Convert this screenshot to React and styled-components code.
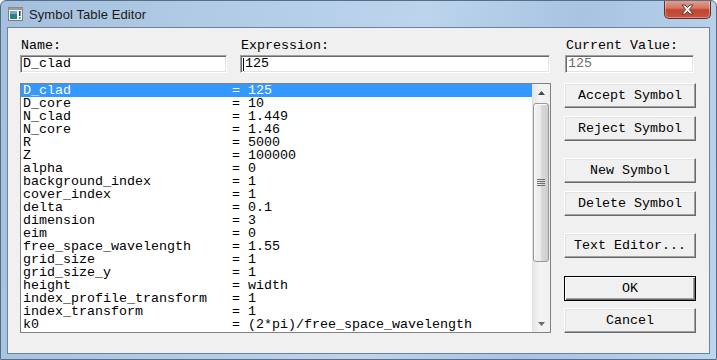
import React from 'react';
import styled, {createGlobalStyle} from 'styled-components';

const GlobalStyle = createGlobalStyle`
  html, body {
    margin: 0;
    padding: 0;
    background: #ffffff;
  }
`;

const MONO = `"Liberation Mono", "DejaVu Sans Mono", monospace`;

const symbols = [
  ['D_clad', '125'],
  ['D_core', '10'],
  ['N_clad', '1.449'],
  ['N_core', '1.46'],
  ['R', '5000'],
  ['Z', '100000'],
  ['alpha', '0'],
  ['background_index', '1'],
  ['cover_index', '1'],
  ['delta', '0.1'],
  ['dimension', '3'],
  ['eim', '0'],
  ['free_space_wavelength', '1.55'],
  ['grid_size', '1'],
  ['grid_size_y', '1'],
  ['height', 'width'],
  ['index_profile_transform', '1'],
  ['index_transform', '1'],
  ['k0', '(2*pi)/free_space_wavelength'],
];

//-----< Window frame -----\\
const Window = styled.div`
  width: 717px;
  height: 360px;
  box-sizing: border-box;
  display: flex;
  flex-direction: column;
  border: 1px solid #566e88;
  border-radius: 6px 6px 0 0;
  background: linear-gradient(100deg, #a4c0dd 0%, #b3cce6 30%, #bcd4ec 55%, #a8c4e1 75%, #bdd5ee 100%);
  overflow: hidden;
`;

const TitleBar = styled.div`
  height: 26px;
  display: flex;
  align-items: center;
  padding-left: 7px;
  flex-shrink: 0;
`;

const TitleText = styled.span`
  margin-left: 6px;
  font-family: "Liberation Sans", Arial, sans-serif;
  font-size: 13px;
  color: #1b1b1b;
  letter-spacing: 0.1px;
`;

const CloseButton = styled.div`
  margin-left: auto;
  margin-right: 5px;
  align-self: flex-start;
  margin-top: -1px;
  width: 47px;
  height: 19px;
  box-sizing: border-box;
  border: 1px solid #6a2b24;
  border-top: none;
  border-radius: 0 0 5px 5px;
  background: linear-gradient(180deg, #e2a496 0%, #d47462 45%, #c2452f 55%, #c9553f 100%);
  box-shadow: inset 0 0 0 1px rgba(255,255,255,0.35);
  display: flex;
  align-items: center;
  justify-content: center;
`;

const Client = styled.div`
  margin: 0 6px;
  height: 327px;
  box-sizing: border-box;
  border: 1px solid #6e8196;
  background: #f0f0f0;
  padding: 10px 12px 0 12px;
  font-family: ${MONO};
  font-size: 13.33px;
  color: #000;
`;

//-----< Fields -----\\
const TopRow = styled.div`
  display: flex;
  align-items: flex-start;
`;

const Field = styled.div`
  width: ${p => p.$w}px;
  margin-left: ${p => p.$ml || 0}px;
  display: flex;
  flex-direction: column;
`;

const Label = styled.label`
  height: 15px;
  line-height: 15px;
  padding-left: 1px;
  margin-bottom: 2px;
  color: #000;
  white-space: pre;
`;

const Input = styled.div`
  height: 18px;
  box-sizing: border-box;
  border: 1px solid;
  border-color: #a0a0a0 #ffffff #ffffff #a0a0a0;
  box-shadow: inset 1px 1px #696969, inset -1px -1px #e3e3e3;
  background: #fff;
  padding: 0 2px;
  line-height: 16px;
  display: flex;
  align-items: center;
  color: ${p => p.$disabled ? '#6d6d6d' : '#000'};
  white-space: pre;
`;

const Caret = styled.span`
  width: 1px;
  height: 13px;
  background: #000;
  margin-right: 1px;
`;

//-----< List -----\\
const BottomRow = styled.div`
  display: flex;
  margin-top: 10px;
`;

const ListBox = styled.div`
  width: 531px;
  height: 250px;
  box-sizing: border-box;
  border: 1px solid #828282;
  background: #fff;
  display: flex;
`;

const Rows = styled.div`
  flex: 1;
  overflow: hidden;
`;

const Row = styled.div`
  display: grid;
  grid-template-columns: 209px 1fr;
  height: 13px;
  line-height: 13px;
  padding-left: 2px;
  white-space: pre;
  background: ${p => p.$selected ? '#3399ff' : 'transparent'};
  color: ${p => p.$selected ? '#fff' : '#000'};
`;

const ScrollBar = styled.div`
  width: 17px;
  display: flex;
  flex-direction: column;
  background: linear-gradient(90deg, #e6e6e6, #f4f4f4 40%, #f0f0f0);
  border-left: 1px solid #e2e2e2;
`;

const ArrowBox = styled.div`
  height: 17px;
  display: flex;
  align-items: center;
  justify-content: center;
  flex-shrink: 0;
`;

const Track = styled.div`
  flex: 1;
  padding-top: 2px;
`;

const Thumb = styled.div`
  height: 159px;
  margin: 0 1px 0 0;
  box-sizing: border-box;
  border: 1px solid #979797;
  border-radius: 3px;
  background: linear-gradient(90deg, #f2f2f2 0%, #ebebeb 45%, #d9d9d9 55%, #cfcfcf 100%);
  box-shadow: inset 1px 1px #fbfbfb;
  display: flex;
  align-items: center;
  justify-content: center;
`;

//-----< Buttons -----\\
const ButtonColumn = styled.div`
  width: 132px;
  margin-left: 13px;
  display: flex;
  flex-direction: column;
`;

const Button = styled.button`
  height: 25px;
  margin-top: ${p => p.$gap || 0}px;
  box-sizing: border-box;
  padding: 0;
  font-family: ${MONO};
  font-size: 13.33px;
  color: #000;
  background: #f0f0f0;
  border: 1px solid;
  border-color: ${p => p.$default ? '#000 #000 #000 #000' : '#ffffff #696969 #696969 #ffffff'};
  box-shadow: ${p => p.$default
    ? 'inset 1px 1px #ffffff, inset -1px -1px #696969, inset -2px -2px #a0a0a0'
    : 'inset -1px -1px #a0a0a0, inset 1px 1px #e3e3e3'};
  white-space: pre;
`;

function AppIcon() {
  return (
    <svg width="15" height="14" viewBox="0 0 15 14">
      <rect x="0.5" y="0.5" width="14" height="13" fill="#f4f4f4" stroke="#7d7d7d"/>
      <rect x="0.5" y="0.5" width="14" height="2.5" fill="#9a9a9a"/>
      <rect x="2" y="4" width="7" height="8" fill="#2d7f8a"/>
      <rect x="2" y="4" width="7" height="3" fill="#6fb0b8"/>
      <rect x="11" y="4" width="1.5" height="5" fill="#22355f"/>
      <rect x="11" y="10" width="1.5" height="2" fill="#3aa33a"/>
    </svg>
  );
}

function CloseGlyph() {
  return (
    <svg width="13" height="11" viewBox="0 0 13 11">
      <path d="M1 1 L4 1 L6.5 3.6 L9 1 L12 1 L8.3 5.5 L12 10 L9 10 L6.5 7.4 L4 10 L1 10 L4.7 5.5 Z"
        fill="#ffffff" stroke="#5a2a26" strokeWidth="0.9" strokeLinejoin="round"/>
    </svg>
  );
}

function Arrow({down}) {
  return (
    <svg width="7" height="4" viewBox="0 0 7 4">
      {down
        ? <path d="M0 0 L7 0 L3.5 4 Z" fill="#6a6a6a"/>
        : <path d="M0 4 L7 4 L3.5 0 Z" fill="#4a4a4a"/>}
    </svg>
  );
}

function Grip() {
  return (
    <svg width="8" height="7" viewBox="0 0 8 7">
      <rect x="0" y="0" width="8" height="1" fill="#6d6d6d"/>
      <rect x="0" y="2" width="8" height="1" fill="#6d6d6d"/>
      <rect x="0" y="4" width="8" height="1" fill="#6d6d6d"/>
      <rect x="0" y="6" width="8" height="1" fill="#6d6d6d"/>
    </svg>
  );
}

export default function App() {

  function renderRows() {
    return symbols.map((item, i) => {
      return (
        <Row key={item[0]} $selected={i === 0}>
          <span>{item[0]}</span>
          <span>{'= ' + item[1]}</span>
        </Row>
      );
    });
  }

  return (
    <>
      <GlobalStyle/>
      <Window>
        <TitleBar>
          <AppIcon/>
          <TitleText>Symbol Table Editor</TitleText>
          <CloseButton><CloseGlyph/></CloseButton>
        </TitleBar>
        <Client>
          <TopRow>
            <Field $w={207}>
              <Label>Name:</Label>
              <Input>D_clad</Input>
            </Field>
            <Field $w={310} $ml={13}>
              <Label>Expression:</Label>
              <Input><Caret/>125</Input>
            </Field>
            <Field $w={129} $ml={15}>
              <Label>Current Value:</Label>
              <Input $disabled>125</Input>
            </Field>
          </TopRow>
          <BottomRow>
            <ListBox>
              <Rows>{renderRows()}</Rows>
              <ScrollBar>
                <ArrowBox><Arrow/></ArrowBox>
                <Track>
                  <Thumb><Grip/></Thumb>
                </Track>
                <ArrowBox><Arrow down/></ArrowBox>
              </ScrollBar>
            </ListBox>
            <ButtonColumn>
              <Button>Accept Symbol</Button>
              <Button $gap={8}>Reject Symbol</Button>
              <Button $gap={17}>New Symbol</Button>
              <Button $gap={8}>Delete Symbol</Button>
              <Button $gap={17}>Text Editor...</Button>
              <Button $gap={18} $default>OK</Button>
              <Button $gap={7}>Cancel</Button>
            </ButtonColumn>
          </BottomRow>
        </Client>
      </Window>
    </>
  );
}
